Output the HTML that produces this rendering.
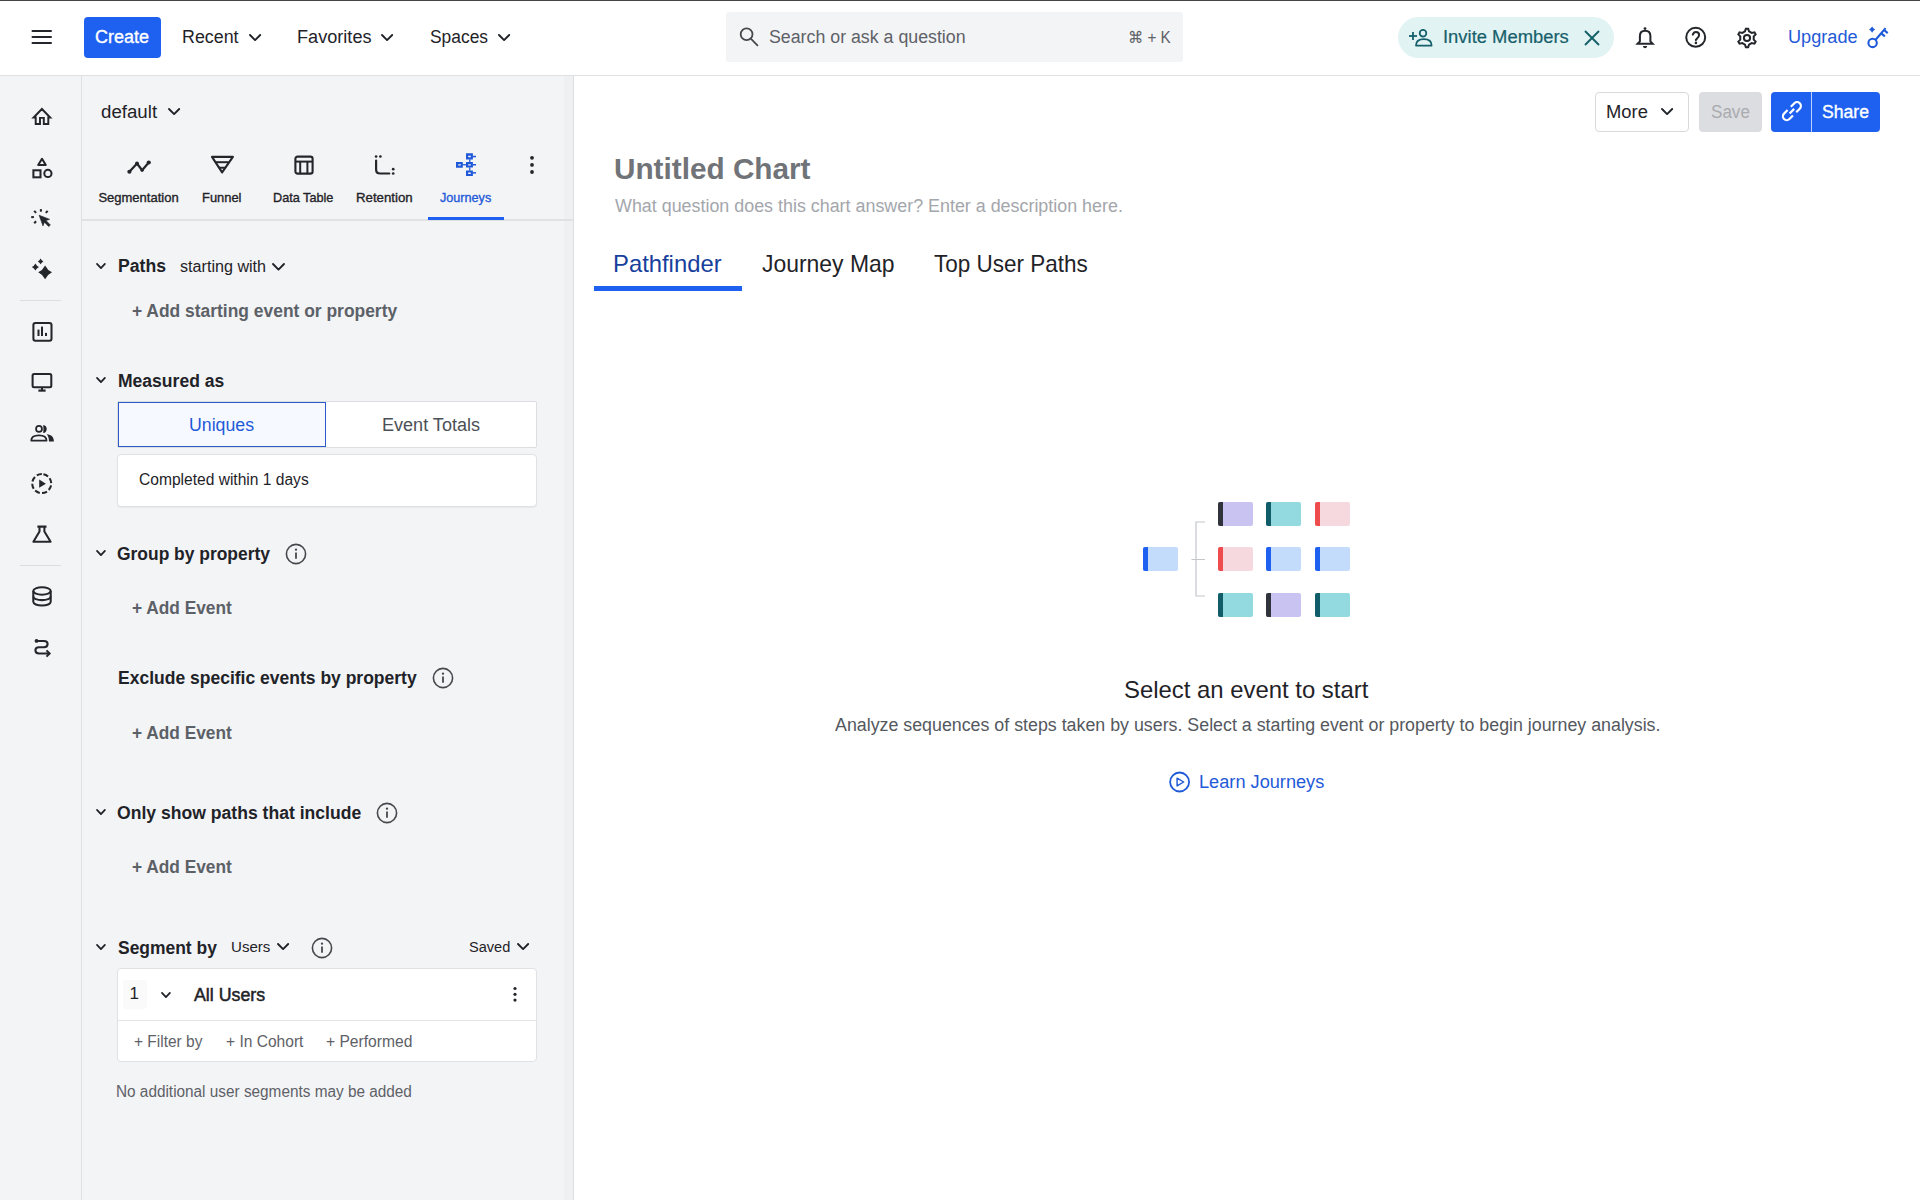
<!DOCTYPE html>
<html><head><meta charset="utf-8"><title>Journeys</title>
<style>
html,body{margin:0;padding:0;width:1920px;height:1200px;overflow:hidden;background:#fff}
body{position:relative;font-family:"Liberation Sans",sans-serif}
.t{position:absolute;white-space:nowrap;transform-origin:0 0}
svg{overflow:visible}
</style></head><body>
<div style="position:absolute;left:0px;top:0px;width:1920px;height:1200px;background:#fff"></div>
<div style="position:absolute;left:0px;top:76px;width:82px;height:1124px;background:#f3f4f6"></div>
<div style="position:absolute;left:82px;top:76px;width:492px;height:1124px;background:#f3f4f6"></div>
<div style="position:absolute;left:81px;top:76px;width:1px;height:1124px;background:#dfe1e5"></div>
<div style="position:absolute;left:564px;top:76px;width:9px;height:1124px;background:#eff0f2"></div>
<div style="position:absolute;left:573px;top:76px;width:1px;height:1124px;background:#dcdee2"></div>
<div style="position:absolute;left:0px;top:75px;width:1920px;height:1px;background:#dfe1e5"></div>
<div style="position:absolute;left:0px;top:0px;width:1920px;height:1px;background:#444"></div>
<svg style="position:absolute;left:30px;top:28px;" width="24" height="18" viewBox="0 0 24 18" fill="none"><line x1="2.5" y1="3" x2="21" y2="3" stroke="#23262b" stroke-width="2" stroke-linecap="round"/><line x1="2.5" y1="9" x2="21" y2="9" stroke="#23262b" stroke-width="2" stroke-linecap="round"/><line x1="2.5" y1="15" x2="21" y2="15" stroke="#23262b" stroke-width="2" stroke-linecap="round"/></svg>
<div style="position:absolute;left:84px;top:17px;width:77px;height:41px;background:#1e61f0;border-radius:4px"></div>
<svg style="position:absolute;left:247.9px;top:32.6px;" width="14.2" height="9.1" viewBox="0 0 14.2 9.1" fill="none"><polyline points="2,2 7.1,7.1 12.2,2" stroke="#1f2328" stroke-width="1.9" fill="none" stroke-linecap="round" stroke-linejoin="round"/></svg>
<svg style="position:absolute;left:380.4px;top:32.6px;" width="14.2" height="9.1" viewBox="0 0 14.2 9.1" fill="none"><polyline points="2,2 7.1,7.1 12.2,2" stroke="#1f2328" stroke-width="1.9" fill="none" stroke-linecap="round" stroke-linejoin="round"/></svg>
<svg style="position:absolute;left:496.9px;top:32.6px;" width="14.2" height="9.1" viewBox="0 0 14.2 9.1" fill="none"><polyline points="2,2 7.1,7.1 12.2,2" stroke="#1f2328" stroke-width="1.9" fill="none" stroke-linecap="round" stroke-linejoin="round"/></svg>
<div style="position:absolute;left:726px;top:12px;width:457px;height:50px;background:#f3f4f6;border-radius:3px"></div>
<svg style="position:absolute;left:736px;top:24px;" width="24" height="24" viewBox="0 0 24 24" fill="none"><circle cx="10.6" cy="10.3" r="5.9" stroke="#45484d" stroke-width="1.8"/><line x1="15" y1="14.8" x2="21.3" y2="21.3" stroke="#45484d" stroke-width="1.8" stroke-linecap="square"/></svg>
<div style="position:absolute;left:1398px;top:17px;width:216px;height:41px;background:#e2f3f3;border-radius:21px"></div>
<svg style="position:absolute;left:1406px;top:28px;" width="30" height="20" viewBox="0 0 30 20" fill="none"><line x1="3" y1="8" x2="11" y2="8" stroke="#16606b" stroke-width="1.8"/><line x1="7" y1="4" x2="7" y2="12" stroke="#16606b" stroke-width="1.8"/><circle cx="17" cy="5.2" r="3.3" stroke="#16606b" stroke-width="1.8"/><path d="M10 17.6 C10 13 13 11.2 17.9 11.2 C22.8 11.2 25.6 13 25.6 17.6 Z" stroke="#16606b" stroke-width="1.8" stroke-linejoin="round"/></svg>
<svg style="position:absolute;left:1582px;top:28px;" width="20" height="20" viewBox="0 0 20 20" fill="none"><line x1="3" y1="3" x2="17" y2="17" stroke="#16606b" stroke-width="1.9"/><line x1="17" y1="3" x2="3" y2="17" stroke="#16606b" stroke-width="1.9"/></svg>
<svg style="position:absolute;left:1634px;top:25px;" width="22" height="24" viewBox="0 0 22 24" fill="none"><path d="M3.6 18.8 L5.9 16.4 L5.9 11 C5.9 7.7 8.1 5.7 11.15 5.7 C14.2 5.7 16.4 7.7 16.4 11 L16.4 16.4 L18.7 18.8 Z" stroke="#23262b" stroke-width="2" stroke-linejoin="miter"/><circle cx="11" cy="3.6" r="1.4" fill="#23262b"/><path d="M8.9 21 L13.2 21 A2.15 2.15 0 0 1 8.9 21 Z" fill="#23262b"/></svg>
<svg style="position:absolute;left:1684px;top:26px;" width="24" height="24" viewBox="0 0 24 24" fill="none"><circle cx="11.7" cy="11.3" r="9.5" stroke="#23262b" stroke-width="2"/><path d="M8.8 8.6 Q9.7 5.9 11.9 5.9 Q15.1 5.9 15.1 9 Q15.1 10.4 13.6 11.9 L11.8 14" stroke="#23262b" stroke-width="2" stroke-linecap="round" fill="none"/><circle cx="11.9" cy="16.9" r="1.3" fill="#23262b"/></svg>
<svg style="position:absolute;left:1735.5px;top:26.5px;" width="22" height="22" viewBox="0 0 22 22" fill="none"><path d="M8.98 4.40 L9.85 1.67 L12.15 1.67 L13.02 4.40 L15.71 5.95 L18.51 5.34 L19.65 7.33 L17.72 9.45 L17.72 12.55 L19.65 14.67 L18.51 16.66 L15.71 16.05 L13.02 17.60 L12.15 20.33 L9.85 20.33 L8.98 17.60 L6.29 16.05 L3.49 16.66 L2.35 14.67 L4.28 12.55 L4.28 9.45 L2.35 7.33 L3.49 5.34 L6.29 5.95Z" stroke="#23262b" stroke-width="2" stroke-linejoin="miter"/><circle cx="11" cy="11" r="3.1" stroke="#23262b" stroke-width="2"/></svg>
<svg style="position:absolute;left:1864px;top:24px;" width="28" height="26" viewBox="0 0 28 26" fill="none"><g stroke="#1f5ad8" stroke-width="2.1" fill="none"><circle cx="8.6" cy="18.9" r="4.2"/><line x1="11.6" y1="15.8" x2="21.6" y2="4.1"/><line x1="17" y1="9.1" x2="20.9" y2="12.4"/><line x1="19.8" y1="5.8" x2="23.7" y2="9.1"/></g><path d="M8.1 2.4999999999999996 Q9.154 4.545999999999999 11.2 5.6 Q9.154 6.654 8.1 8.7 Q7.045999999999999 6.654 5.0 5.6 Q7.045999999999999 4.545999999999999 8.1 2.4999999999999996Z" fill="#1f5ad8"/></svg>
<svg style="position:absolute;left:30px;top:104px;" width="24" height="24" viewBox="0 0 24 24" fill="none"><path d="M5.7 20 L5.7 13.5 L3.6 13.5 L11.9 5 L20.2 13.5 L18.3 13.5 L18.3 20 L13.8 20 L13.8 13.85 L10 13.85 L10 20 Z" stroke="#23262b" stroke-width="1.95" fill="none" stroke-linejoin="miter" stroke-miterlimit="3"/></svg>
<svg style="position:absolute;left:30px;top:155px;" width="24" height="24" viewBox="0 0 24 24" fill="none"><path d="M12 3.8 L15.8 10 L8.2 10 Z" stroke="#23262b" stroke-width="2.05" stroke-linejoin="round"/><rect x="3.4" y="15.3" width="7.1" height="7" stroke="#23262b" stroke-width="2.05"/><circle cx="17.9" cy="18.4" r="3.6" stroke="#23262b" stroke-width="2.05"/></svg>
<svg style="position:absolute;left:30px;top:206px;" width="24" height="24" viewBox="0 0 24 24" fill="none"><path d="M9.1 9.2 L19.6 13.3 L16 14.6 L20.4 19 L18.7 20.6 L14.4 16.2 L13 19.9 Z" fill="#23262b" stroke="#23262b" stroke-width="0.6" stroke-linejoin="round"/><line x1="10.9" y1="3.1" x2="10.9" y2="5.7" stroke="#23262b" stroke-width="2.05"/><line x1="4.2" y1="4.9" x2="6.1" y2="6.9" stroke="#23262b" stroke-width="2.05"/><line x1="17.7" y1="4.9" x2="15.8" y2="6.9" stroke="#23262b" stroke-width="2.05"/><line x1="1.2" y1="11.1" x2="3.9" y2="11.1" stroke="#23262b" stroke-width="2.05"/><line x1="4.2" y1="17.2" x2="6.1" y2="15.2" stroke="#23262b" stroke-width="2.05"/></svg>
<svg style="position:absolute;left:30px;top:256px;" width="24" height="24" viewBox="0 0 24 24" fill="none"><path d="M15.1 9.4 Q17.377 14.023 22.0 16.3 Q17.377 18.577 15.1 23.200000000000003 Q12.823 18.577 8.2 16.3 Q12.823 14.023 15.1 9.4Z" fill="#23262b"/><path d="M5.4 7.4 Q6.588000000000001 9.812 9.0 11 Q6.588000000000001 12.188 5.4 14.6 Q4.212 12.188 1.8000000000000003 11 Q4.212 9.812 5.4 7.4Z" fill="#23262b"/><path d="M10.6 2.6000000000000005 Q11.524 4.476000000000001 13.399999999999999 5.4 Q11.524 6.324 10.6 8.2 Q9.676 6.324 7.8 5.4 Q9.676 4.476000000000001 10.6 2.6000000000000005Z" fill="#23262b"/></svg>
<div style="position:absolute;left:20px;top:300px;width:41px;height:1px;background:#dcdee2"></div>
<svg style="position:absolute;left:30px;top:319px;" width="24" height="24" viewBox="0 0 24 24" fill="none"><rect x="3.4" y="4" width="18.1" height="17.7" rx="2" stroke="#23262b" stroke-width="2.05"/><line x1="8.5" y1="10.6" x2="8.5" y2="17" stroke="#23262b" stroke-width="2.05"/><line x1="12" y1="7.6" x2="12" y2="17" stroke="#23262b" stroke-width="2.05"/><line x1="16" y1="13.9" x2="16" y2="17" stroke="#23262b" stroke-width="2.05"/></svg>
<svg style="position:absolute;left:30px;top:370px;" width="24" height="24" viewBox="0 0 24 24" fill="none"><rect x="2.6" y="4" width="18.7" height="13.3" rx="1.5" stroke="#23262b" stroke-width="2.05"/><line x1="12" y1="17.3" x2="12" y2="20.5" stroke="#23262b" stroke-width="2.05"/><line x1="8.4" y1="20.6" x2="15.6" y2="20.6" stroke="#23262b" stroke-width="2.2"/></svg>
<svg style="position:absolute;left:30px;top:421px;" width="24" height="24" viewBox="0 0 24 24" fill="none"><circle cx="9" cy="7.9" r="2.95" stroke="#23262b" stroke-width="1.75"/><path d="M1.25 19.55 C1.25 16 4.5 14.25 8.9 14.25 C13.3 14.25 16.55 16 16.55 19.55 Z" stroke="#23262b" stroke-width="1.75" stroke-linejoin="round"/><path d="M13.2 3.9 A4.15 4.15 0 0 1 13.2 12.1 Q13.7 8 13.2 3.9 Z" fill="#23262b"/><path d="M16.8 13.3 C21.3 13.6 23.9 16.2 23.9 20.4 L19 20.4 C19 17.6 18.3 15.2 16.8 13.3 Z" fill="#23262b"/></svg>
<svg style="position:absolute;left:30px;top:472px;" width="24" height="24" viewBox="0 0 24 24" fill="none"><circle cx="11.75" cy="11.6" r="9.5" stroke="#23262b" stroke-width="2.05" stroke-dasharray="5.2 2.3" transform="rotate(-80 11.75 11.6)"/><path d="M9.2 7.6 L15.9 11.7 L9.2 15.8 Z" fill="#23262b"/></svg>
<svg style="position:absolute;left:30px;top:523px;" width="24" height="24" viewBox="0 0 24 24" fill="none"><path d="M7.4 3.6 L16.5 3.6 M9.5 3.8 L9.5 8.4 L3.4 18.8 L20.6 18.8 L14.4 8.4 L14.4 3.8" stroke="#23262b" stroke-width="2.05" stroke-linejoin="round" fill="none"/></svg>
<div style="position:absolute;left:20px;top:565px;width:41px;height:1px;background:#dcdee2"></div>
<svg style="position:absolute;left:30px;top:584px;" width="24" height="24" viewBox="0 0 24 24" fill="none"><ellipse cx="12" cy="7" rx="8.7" ry="3.7" stroke="#23262b" stroke-width="2.05"/><path d="M3.3 7 L3.3 17.8 C3.3 20 7.2 21.5 12 21.5 C16.8 21.5 20.7 20 20.7 17.8 L20.7 7" stroke="#23262b" stroke-width="2.05"/><path d="M3.3 12.4 C3.3 14.6 7.2 16.1 12 16.1 C16.8 16.1 20.7 14.6 20.7 12.4" stroke="#23262b" stroke-width="2.05"/></svg>
<svg style="position:absolute;left:30px;top:636px;" width="24" height="24" viewBox="0 0 24 24" fill="none"><circle cx="6.5" cy="4.9" r="1.9" fill="#23262b"/><path d="M6.5 4.9 L14 4.9 C16.3 4.9 17.6 6.3 17.6 8.05 C17.6 9.8 16.3 11.2 14 11.2 L9 11.2 C6.7 11.2 5.4 12.6 5.4 14.35 C5.4 16.1 6.7 17.5 9 17.5 L19.4 17.5" stroke="#23262b" stroke-width="2.05" fill="none"/><path d="M16.5 14.4 L19.6 17.5 L16.5 20.6" stroke="#23262b" stroke-width="2.05" fill="none"/></svg>
<svg style="position:absolute;left:166.9px;top:106.6px;" width="14.2" height="9.1" viewBox="0 0 14.2 9.1" fill="none"><polyline points="2,2 7.1,7.1 12.2,2" stroke="#1f2328" stroke-width="1.9" fill="none" stroke-linecap="round" stroke-linejoin="round"/></svg>
<svg style="position:absolute;left:125px;top:155px;" width="28" height="22" viewBox="0 0 28 22" fill="none"><polyline points="4.4,16.75 12,8.5 17.1,15.25 23.75,7.5" stroke="#23262b" stroke-width="2.2" fill="none" stroke-linejoin="round"/><circle cx="4.4" cy="16.75" r="2.1" fill="#23262b"/><circle cx="12" cy="8.5" r="2" fill="#23262b"/><circle cx="17.1" cy="15.25" r="1.6" fill="#23262b"/><circle cx="23.75" cy="7.5" r="2.1" fill="#23262b"/></svg>
<svg style="position:absolute;left:209px;top:153px;" width="28" height="24" viewBox="0 0 28 24" fill="none"><path d="M3 3.9 L23.9 3.9 L13.1 19.4 Z" stroke="#23262b" stroke-width="2.1" stroke-linejoin="round" fill="none"/><line x1="6.5" y1="9.2" x2="19.7" y2="9.2" stroke="#23262b" stroke-width="2"/><line x1="10" y1="14.75" x2="16.2" y2="14.75" stroke="#23262b" stroke-width="2"/></svg>
<svg style="position:absolute;left:292px;top:153px;" width="24" height="24" viewBox="0 0 24 24" fill="none"><rect x="3.4" y="3.6" width="17.2" height="17" rx="2.2" stroke="#23262b" stroke-width="2.1"/><line x1="3.4" y1="8.6" x2="20.6" y2="8.6" stroke="#23262b" stroke-width="2"/><line x1="8.2" y1="8.6" x2="8.2" y2="20.6" stroke="#23262b" stroke-width="2"/><line x1="15.4" y1="8.6" x2="15.4" y2="20.6" stroke="#23262b" stroke-width="2"/></svg>
<svg style="position:absolute;left:372px;top:152px;" width="26" height="24" viewBox="0 0 26 24" fill="none"><path d="M4.1 8.5 L4.1 17.4 Q4.1 21.5 8.2 21.5 L17.3 21.5" stroke="#23262b" stroke-width="2.2" stroke-linecap="round" fill="none"/><circle cx="4.1" cy="4.5" r="1.35" fill="#23262b"/><circle cx="8.4" cy="4.5" r="1.35" fill="#23262b"/><circle cx="21.2" cy="17.2" r="1.35" fill="#23262b"/><circle cx="21.2" cy="21.5" r="1.35" fill="#23262b"/></svg>
<svg style="position:absolute;left:450px;top:148px;" width="32" height="32" viewBox="0 0 32 32" fill="none"><path fill-rule="evenodd" fill="#1f58d8" d="M6 13.9 h6.8 v5.8 h-6.8 Z M8.2 16.2 v1.3 h2.6 v-1.3 Z M16 5.3 h6.9 v6.2 h-6.9 Z M18.2 7.8 v1.4 h2.6 v-1.4 Z M16 14.1 h6.9 v5.5 h-6.9 Z M18.2 16.2 v1.3 h2.6 v-1.3 Z M16 22.4 h6.9 v5.6 h-6.9 Z M18.2 24.6 v1.3 h2.6 v-1.3 Z"/><rect x="12.6" y="16.1" width="3.6" height="1.3" fill="#1f58d8"/><rect x="19.1" y="11.3" width="1.3" height="3" fill="#1f58d8"/><rect x="19.1" y="19.4" width="1.3" height="3.2" fill="#1f58d8"/><rect x="22.7" y="7.8" width="3.3" height="1.5" fill="#1f58d8"/><rect x="22.7" y="16" width="3.3" height="1.5" fill="#1f58d8"/><rect x="22.7" y="24.1" width="3.3" height="1.5" fill="#1f58d8"/></svg>
<svg style="position:absolute;left:526px;top:154px;" width="12" height="22" viewBox="0 0 12 22" fill="none"><circle cx="6" cy="3.8" r="1.9" fill="#23262b"/><circle cx="6" cy="10.9" r="1.9" fill="#23262b"/><circle cx="6" cy="18" r="1.9" fill="#23262b"/></svg>
<div style="position:absolute;left:82px;top:219px;width:491px;height:2px;background:#dfe1e5"></div>
<div style="position:absolute;left:428px;top:217px;width:76px;height:3px;background:#1e61f0"></div>
<svg style="position:absolute;left:95.3px;top:262.4px;" width="11.9" height="8.1" viewBox="0 0 11.9 8.1" fill="none"><polyline points="2,2 5.95,6.1 9.9,2" stroke="#1f2328" stroke-width="1.8" fill="none" stroke-linecap="round" stroke-linejoin="round"/></svg>
<svg style="position:absolute;left:270.8px;top:261.6px;" width="15" height="9.6" viewBox="0 0 15 9.6" fill="none"><polyline points="2,2 7.5,7.6 13,2" stroke="#1f2328" stroke-width="1.9" fill="none" stroke-linecap="round" stroke-linejoin="round"/></svg>
<svg style="position:absolute;left:95.3px;top:376.2px;" width="11.9" height="8.1" viewBox="0 0 11.9 8.1" fill="none"><polyline points="2,2 5.95,6.1 9.9,2" stroke="#1f2328" stroke-width="1.8" fill="none" stroke-linecap="round" stroke-linejoin="round"/></svg>
<div style="position:absolute;left:117px;top:401px;width:420px;height:47px;background:#fff;border:1px solid #dcdee2;box-sizing:border-box;border-radius:2px"></div>
<div style="position:absolute;left:118px;top:402px;width:208px;height:45px;border:1.6px solid #2c5bc9;box-sizing:border-box;background:#f6f9ff"></div>
<div style="position:absolute;left:117px;top:454px;width:420px;height:53px;background:#fff;border:1px solid #dfe1e5;box-sizing:border-box;border-radius:4px;box-shadow:0 1px 1px rgba(0,0,0,0.05)"></div>
<svg style="position:absolute;left:95.3px;top:549.2px;" width="11.9" height="8.1" viewBox="0 0 11.9 8.1" fill="none"><polyline points="2,2 5.95,6.1 9.9,2" stroke="#1f2328" stroke-width="1.8" fill="none" stroke-linecap="round" stroke-linejoin="round"/></svg>
<svg style="position:absolute;left:284.2px;top:541.7px;" width="24" height="24" viewBox="0 0 24 24" fill="none"><circle cx="12" cy="12" r="9.6" stroke="#45484d" stroke-width="1.6"/><line x1="12" y1="10.6" x2="12" y2="16.8" stroke="#45484d" stroke-width="1.8"/><circle cx="12" cy="7.7" r="1.15" fill="#45484d"/></svg>
<svg style="position:absolute;left:431px;top:665.7px;" width="24" height="24" viewBox="0 0 24 24" fill="none"><circle cx="12" cy="12" r="9.6" stroke="#45484d" stroke-width="1.6"/><line x1="12" y1="10.6" x2="12" y2="16.8" stroke="#45484d" stroke-width="1.8"/><circle cx="12" cy="7.7" r="1.15" fill="#45484d"/></svg>
<svg style="position:absolute;left:95.3px;top:808.2px;" width="11.9" height="8.1" viewBox="0 0 11.9 8.1" fill="none"><polyline points="2,2 5.95,6.1 9.9,2" stroke="#1f2328" stroke-width="1.8" fill="none" stroke-linecap="round" stroke-linejoin="round"/></svg>
<svg style="position:absolute;left:374.8px;top:800.6px;" width="24" height="24" viewBox="0 0 24 24" fill="none"><circle cx="12" cy="12" r="9.6" stroke="#45484d" stroke-width="1.6"/><line x1="12" y1="10.6" x2="12" y2="16.8" stroke="#45484d" stroke-width="1.8"/><circle cx="12" cy="7.7" r="1.15" fill="#45484d"/></svg>
<svg style="position:absolute;left:95.3px;top:942.7px;" width="11.9" height="8.1" viewBox="0 0 11.9 8.1" fill="none"><polyline points="2,2 5.95,6.1 9.9,2" stroke="#1f2328" stroke-width="1.8" fill="none" stroke-linecap="round" stroke-linejoin="round"/></svg>
<svg style="position:absolute;left:276.4px;top:942.1px;" width="14.2" height="9.1" viewBox="0 0 14.2 9.1" fill="none"><polyline points="2,2 7.1,7.1 12.2,2" stroke="#1f2328" stroke-width="1.9" fill="none" stroke-linecap="round" stroke-linejoin="round"/></svg>
<svg style="position:absolute;left:310.2px;top:935.5px;" width="24" height="24" viewBox="0 0 24 24" fill="none"><circle cx="12" cy="12" r="9.6" stroke="#45484d" stroke-width="1.6"/><line x1="12" y1="10.6" x2="12" y2="16.8" stroke="#45484d" stroke-width="1.8"/><circle cx="12" cy="7.7" r="1.15" fill="#45484d"/></svg>
<svg style="position:absolute;left:516.4px;top:942.1px;" width="14.2" height="9.1" viewBox="0 0 14.2 9.1" fill="none"><polyline points="2,2 7.1,7.1 12.2,2" stroke="#1f2328" stroke-width="1.9" fill="none" stroke-linecap="round" stroke-linejoin="round"/></svg>
<div style="position:absolute;left:117px;top:968px;width:420px;height:94px;background:#fff;border:1px solid #dfe1e5;box-sizing:border-box;border-radius:4px"></div>
<div style="position:absolute;left:118px;top:1020px;width:418px;height:1px;background:#e3e5e8"></div>
<div style="position:absolute;left:123px;top:980px;width:24px;height:29px;background:#fafafb;border-radius:3px"></div>
<svg style="position:absolute;left:160.3px;top:990.7px;" width="11.9" height="8.1" viewBox="0 0 11.9 8.1" fill="none"><polyline points="2,2 5.95,6.1 9.9,2" stroke="#1f2328" stroke-width="1.8" fill="none" stroke-linecap="round" stroke-linejoin="round"/></svg>
<svg style="position:absolute;left:509px;top:984px;" width="12" height="20" viewBox="0 0 12 20" fill="none"><circle cx="6" cy="4.5" r="1.6" fill="#23262b"/><circle cx="6" cy="10.3" r="1.6" fill="#23262b"/><circle cx="6" cy="16.1" r="1.6" fill="#23262b"/></svg>
<div style="position:absolute;left:1595px;top:92px;width:94px;height:40px;background:#fff;border:1px solid #d7d9dd;box-sizing:border-box;border-radius:4px"></div>
<svg style="position:absolute;left:1660.4px;top:106.6px;" width="14.2" height="9.1" viewBox="0 0 14.2 9.1" fill="none"><polyline points="2,2 7.1,7.1 12.2,2" stroke="#1f2328" stroke-width="1.9" fill="none" stroke-linecap="round" stroke-linejoin="round"/></svg>
<div style="position:absolute;left:1699px;top:92px;width:63px;height:40px;background:#dcdde0;border-radius:4px"></div>
<div style="position:absolute;left:1771px;top:92px;width:109px;height:40px;background:#1e61f0;border-radius:4px"></div>
<div style="position:absolute;left:1811px;top:92px;width:1px;height:40px;background:#bcd0fb"></div>
<svg style="position:absolute;left:1776px;top:96px;" width="32" height="32" viewBox="0 0 32 32" fill="none"><g transform="translate(15.9 15.15) rotate(-45)" stroke="#fff" stroke-width="2.2" fill="none" stroke-linecap="butt"><path d="M2.3 -3.8 L7.3 -3.8 A3.8 3.8 0 0 1 7.3 3.8 L2.3 3.8"/><path d="M-2.3 3.8 L-7.3 3.8 A3.8 3.8 0 0 1 -7.3 -3.8 L-2.3 -3.8"/><path d="M-3.2 0 L3.2 0"/></g></svg>
<div style="position:absolute;left:594px;top:286px;width:148px;height:5px;background:#1e61f0"></div>
<div style="position:absolute;left:1143px;top:547px;width:35px;height:24px;background:#c3dcfb;border-radius:2px"></div>
<div style="position:absolute;left:1143px;top:547px;width:5px;height:24px;background:#1e61f0;border-top-left-radius:2px;border-bottom-left-radius:2px"></div>
<div style="position:absolute;left:1218px;top:502px;width:35px;height:24px;background:#c9c3f2;border-radius:2px"></div>
<div style="position:absolute;left:1218px;top:502px;width:5px;height:24px;background:#30333b;border-top-left-radius:2px;border-bottom-left-radius:2px"></div>
<div style="position:absolute;left:1266px;top:502px;width:35px;height:24px;background:#93d9e0;border-radius:2px"></div>
<div style="position:absolute;left:1266px;top:502px;width:5px;height:24px;background:#115c69;border-top-left-radius:2px;border-bottom-left-radius:2px"></div>
<div style="position:absolute;left:1315px;top:502px;width:35px;height:24px;background:#f6d9df;border-radius:2px"></div>
<div style="position:absolute;left:1315px;top:502px;width:5px;height:24px;background:#ef4d4d;border-top-left-radius:2px;border-bottom-left-radius:2px"></div>
<div style="position:absolute;left:1218px;top:547px;width:35px;height:24px;background:#f6d9df;border-radius:2px"></div>
<div style="position:absolute;left:1218px;top:547px;width:5px;height:24px;background:#ef4d4d;border-top-left-radius:2px;border-bottom-left-radius:2px"></div>
<div style="position:absolute;left:1266px;top:547px;width:35px;height:24px;background:#c3dcfb;border-radius:2px"></div>
<div style="position:absolute;left:1266px;top:547px;width:5px;height:24px;background:#1e61f0;border-top-left-radius:2px;border-bottom-left-radius:2px"></div>
<div style="position:absolute;left:1315px;top:547px;width:35px;height:24px;background:#c3dcfb;border-radius:2px"></div>
<div style="position:absolute;left:1315px;top:547px;width:5px;height:24px;background:#1e61f0;border-top-left-radius:2px;border-bottom-left-radius:2px"></div>
<div style="position:absolute;left:1218px;top:593px;width:35px;height:24px;background:#93d9e0;border-radius:2px"></div>
<div style="position:absolute;left:1218px;top:593px;width:5px;height:24px;background:#115c69;border-top-left-radius:2px;border-bottom-left-radius:2px"></div>
<div style="position:absolute;left:1266px;top:593px;width:35px;height:24px;background:#c9c3f2;border-radius:2px"></div>
<div style="position:absolute;left:1266px;top:593px;width:5px;height:24px;background:#30333b;border-top-left-radius:2px;border-bottom-left-radius:2px"></div>
<div style="position:absolute;left:1315px;top:593px;width:35px;height:24px;background:#93d9e0;border-radius:2px"></div>
<div style="position:absolute;left:1315px;top:593px;width:5px;height:24px;background:#115c69;border-top-left-radius:2px;border-bottom-left-radius:2px"></div>
<svg style="position:absolute;left:1188px;top:518px;" width="22" height="84" viewBox="0 0 22 84" fill="none"><path d="M17 4 L8 4 L8 78 L17 78 M3.5 41.5 L17 41.5" stroke="#c4c6ca" stroke-width="1.2" fill="none"/></svg>
<svg style="position:absolute;left:1166px;top:768px;" width="28" height="28" viewBox="0 0 28 28" fill="none"><circle cx="13.6" cy="14" r="9.5" stroke="#1f5ad8" stroke-width="1.8"/><path d="M11.1 10.1 L17.7 14 L11.1 17.9 Z" stroke="#1f5ad8" stroke-width="1.45" stroke-linejoin="round" fill="none"/></svg>
<div class="t" id="t0" style="left:95.00px;transform:scaleX(1.0000);top:27.66px;font-size:18px;line-height:18px;font-weight:400;color:#fff;-webkit-text-stroke:0.35px currentColor">Create</div>
<div class="t" id="t1" style="left:182.01px;transform:scaleX(0.9911);top:27.86px;font-size:18px;line-height:18px;font-weight:400;color:#1f2328;">Recent</div>
<div class="t" id="t2" style="left:296.99px;transform:scaleX(1.0069);top:27.86px;font-size:18px;line-height:18px;font-weight:400;color:#1f2328;">Favorites</div>
<div class="t" id="t3" style="left:430.03px;transform:scaleX(0.9661);top:27.86px;font-size:18px;line-height:18px;font-weight:400;color:#1f2328;">Spaces</div>
<div class="t" id="t4" style="left:769.01px;transform:scaleX(0.9873);top:28.46px;font-size:18px;line-height:18px;font-weight:400;color:#5e6167;">Search or ask a question</div>
<div class="t" id="t5" style="left:1128.12px;transform:scaleX(0.9524);top:29.95px;font-size:16px;line-height:16px;font-weight:400;color:#5e6167;">⌘ + K</div>
<div class="t" id="t6" style="left:1442.56px;transform:scaleX(1.0223);top:28.26px;font-size:18px;line-height:18px;font-weight:400;color:#16606b;-webkit-text-stroke:0.2px currentColor">Invite Members</div>
<div class="t" id="t7" style="left:1787.99px;transform:scaleX(1.0075);top:27.56px;font-size:18px;line-height:18px;font-weight:400;color:#1f5ad8;">Upgrade</div>
<div class="t" id="t8" style="left:100.96px;transform:scaleX(1.0377);top:102.76px;font-size:18px;line-height:18px;font-weight:400;color:#1f2328;">default</div>
<div class="t" id="t9" style="left:98.40px;transform:scaleX(1.0000);top:190.59px;font-size:13px;line-height:13px;font-weight:400;color:#1f2328;-webkit-text-stroke:0.35px currentColor">Segmentation</div>
<div class="t" id="t10" style="left:202.01px;transform:scaleX(0.9921);top:190.59px;font-size:13px;line-height:13px;font-weight:400;color:#1f2328;-webkit-text-stroke:0.35px currentColor">Funnel</div>
<div class="t" id="t11" style="left:273.01px;transform:scaleX(0.9754);top:190.59px;font-size:13px;line-height:13px;font-weight:400;color:#1f2328;-webkit-text-stroke:0.35px currentColor">Data Table</div>
<div class="t" id="t12" style="left:355.98px;transform:scaleX(1.0185);top:190.59px;font-size:13px;line-height:13px;font-weight:400;color:#1f2328;-webkit-text-stroke:0.35px currentColor">Retention</div>
<div class="t" id="t13" style="left:440.00px;transform:scaleX(0.9717);top:190.59px;font-size:13px;line-height:13px;font-weight:400;color:#1f5ad8;-webkit-text-stroke:0.35px currentColor">Journeys</div>
<div class="t" id="t14" style="left:117.61px;transform:scaleX(0.9792);top:256.86px;font-size:18px;line-height:18px;font-weight:700;color:#1f2328;">Paths</div>
<div class="t" id="t15" style="left:179.60px;transform:scaleX(1.0083);top:259.05px;font-size:16px;line-height:16px;font-weight:400;color:#1f2328;">starting with</div>
<div class="t" id="t16" style="left:132.03px;transform:scaleX(0.9681);top:301.76px;font-size:18px;line-height:18px;font-weight:700;color:#5c6168;">+ Add starting event or property</div>
<div class="t" id="t17" style="left:117.62px;transform:scaleX(0.9741);top:371.76px;font-size:18px;line-height:18px;font-weight:700;color:#1f2328;">Measured as</div>
<div class="t" id="t18" style="left:189.02px;transform:scaleX(0.9846);top:416.16px;font-size:18px;line-height:18px;font-weight:400;color:#1f5ad8;">Uniques</div>
<div class="t" id="t19" style="left:381.79px;transform:scaleX(1.0031);top:416.16px;font-size:18px;line-height:18px;font-weight:400;color:#4b5057;">Event Totals</div>
<div class="t" id="t20" style="left:139.03px;transform:scaleX(0.9734);top:471.75px;font-size:16px;line-height:16px;font-weight:400;color:#1f2328;">Completed within 1 days</div>
<div class="t" id="t21" style="left:117.03px;transform:scaleX(0.9682);top:545.26px;font-size:18px;line-height:18px;font-weight:700;color:#1f2328;">Group by property</div>
<div class="t" id="t22" style="left:132.04px;transform:scaleX(0.9612);top:599.16px;font-size:18px;line-height:18px;font-weight:700;color:#5c6168;">+ Add Event</div>
<div class="t" id="t23" style="left:118.24px;transform:scaleX(0.9725);top:669.46px;font-size:18px;line-height:18px;font-weight:700;color:#1f2328;">Exclude specific events by property</div>
<div class="t" id="t24" style="left:132.04px;transform:scaleX(0.9612);top:723.76px;font-size:18px;line-height:18px;font-weight:700;color:#5c6168;">+ Add Event</div>
<div class="t" id="t25" style="left:117.02px;transform:scaleX(0.9767);top:803.96px;font-size:18px;line-height:18px;font-weight:700;color:#1f2328;">Only show paths that include</div>
<div class="t" id="t26" style="left:132.04px;transform:scaleX(0.9612);top:858.46px;font-size:18px;line-height:18px;font-weight:700;color:#5c6168;">+ Add Event</div>
<div class="t" id="t27" style="left:117.62px;transform:scaleX(0.9693);top:938.51px;font-size:18px;line-height:18px;font-weight:700;color:#1f2328;">Segment by</div>
<div class="t" id="t28" style="left:230.83px;transform:scaleX(0.9718);top:939.18px;font-size:15.5px;line-height:15.5px;font-weight:400;color:#1f2328;">Users</div>
<div class="t" id="t29" style="left:468.64px;transform:scaleX(0.9395);top:939.18px;font-size:15.5px;line-height:15.5px;font-weight:400;color:#1f2328;">Saved</div>
<div class="t" id="t30" style="left:129.50px;top:985.41px;font-size:17px;line-height:17px;font-weight:400;color:#1f2328;font-family:"Liberation Mono",monospace;-webkit-text-stroke:0.4px currentColor">1</div>
<div class="t" id="t31" style="left:193.60px;transform:scaleX(0.9875);top:986.46px;font-size:18px;line-height:18px;font-weight:400;color:#1f2328;-webkit-text-stroke:0.5px currentColor">All Users</div>
<div class="t" id="t32" style="left:134.43px;transform:scaleX(0.9671);top:1033.75px;font-size:16px;line-height:16px;font-weight:400;color:#5e6167;">+ Filter by</div>
<div class="t" id="t33" style="left:225.82px;transform:scaleX(0.9722);top:1033.75px;font-size:16px;line-height:16px;font-weight:400;color:#5e6167;">+ In Cohort</div>
<div class="t" id="t34" style="left:326.21px;transform:scaleX(0.9759);top:1033.75px;font-size:16px;line-height:16px;font-weight:400;color:#5e6167;">+ Performed</div>
<div class="t" id="t35" style="left:116.43px;transform:scaleX(0.9586);top:1083.95px;font-size:16px;line-height:16px;font-weight:400;color:#5e6167;">No additional user segments may be added</div>
<div class="t" id="t36" style="left:1605.98px;transform:scaleX(1.0205);top:102.86px;font-size:18px;line-height:18px;font-weight:400;color:#1f2328;">More</div>
<div class="t" id="t37" style="left:1711.03px;transform:scaleX(0.9475);top:103.26px;font-size:18px;line-height:18px;font-weight:400;color:#a9abb0;">Save</div>
<div class="t" id="t38" style="left:1822.01px;transform:scaleX(0.9787);top:103.26px;font-size:18px;line-height:18px;font-weight:400;color:#fff;-webkit-text-stroke:0.35px currentColor">Share</div>
<div class="t" id="t39" style="left:614.02px;transform:scaleX(0.9908);top:153.60px;font-size:30px;line-height:30px;font-weight:700;color:#707378;">Untitled Chart</div>
<div class="t" id="t40" style="left:614.80px;transform:scaleX(0.9933);top:197.36px;font-size:18px;line-height:18px;font-weight:400;color:#a3a6ab;">What question does this chart answer? Enter a description here.</div>
<div class="t" id="t41" style="left:612.82px;transform:scaleX(0.9925);top:252.48px;font-size:24px;line-height:24px;font-weight:400;color:#17409c;">Pathfinder</div>
<div class="t" id="t42" style="left:761.83px;transform:scaleX(0.9547);top:252.48px;font-size:24px;line-height:24px;font-weight:400;color:#1f2328;">Journey Map</div>
<div class="t" id="t43" style="left:934.45px;transform:scaleX(0.9368);top:252.48px;font-size:24px;line-height:24px;font-weight:400;color:#1f2328;">Top User Paths</div>
<div class="t" id="t44" style="left:1124.41px;transform:scaleX(0.9951);top:678.08px;font-size:24px;line-height:24px;font-weight:400;color:#1f2328;">Select an event to start</div>
<div class="t" id="t45" style="left:834.60px;transform:scaleX(0.9892);top:715.56px;font-size:18px;line-height:18px;font-weight:400;color:#54585e;">Analyze sequences of steps taken by users. Select a starting event or property to begin journey analysis.</div>
<div class="t" id="t46" style="left:1199.39px;transform:scaleX(1.0098);top:772.76px;font-size:18px;line-height:18px;font-weight:400;color:#1f5ad8;">Learn Journeys</div>
</body></html>
